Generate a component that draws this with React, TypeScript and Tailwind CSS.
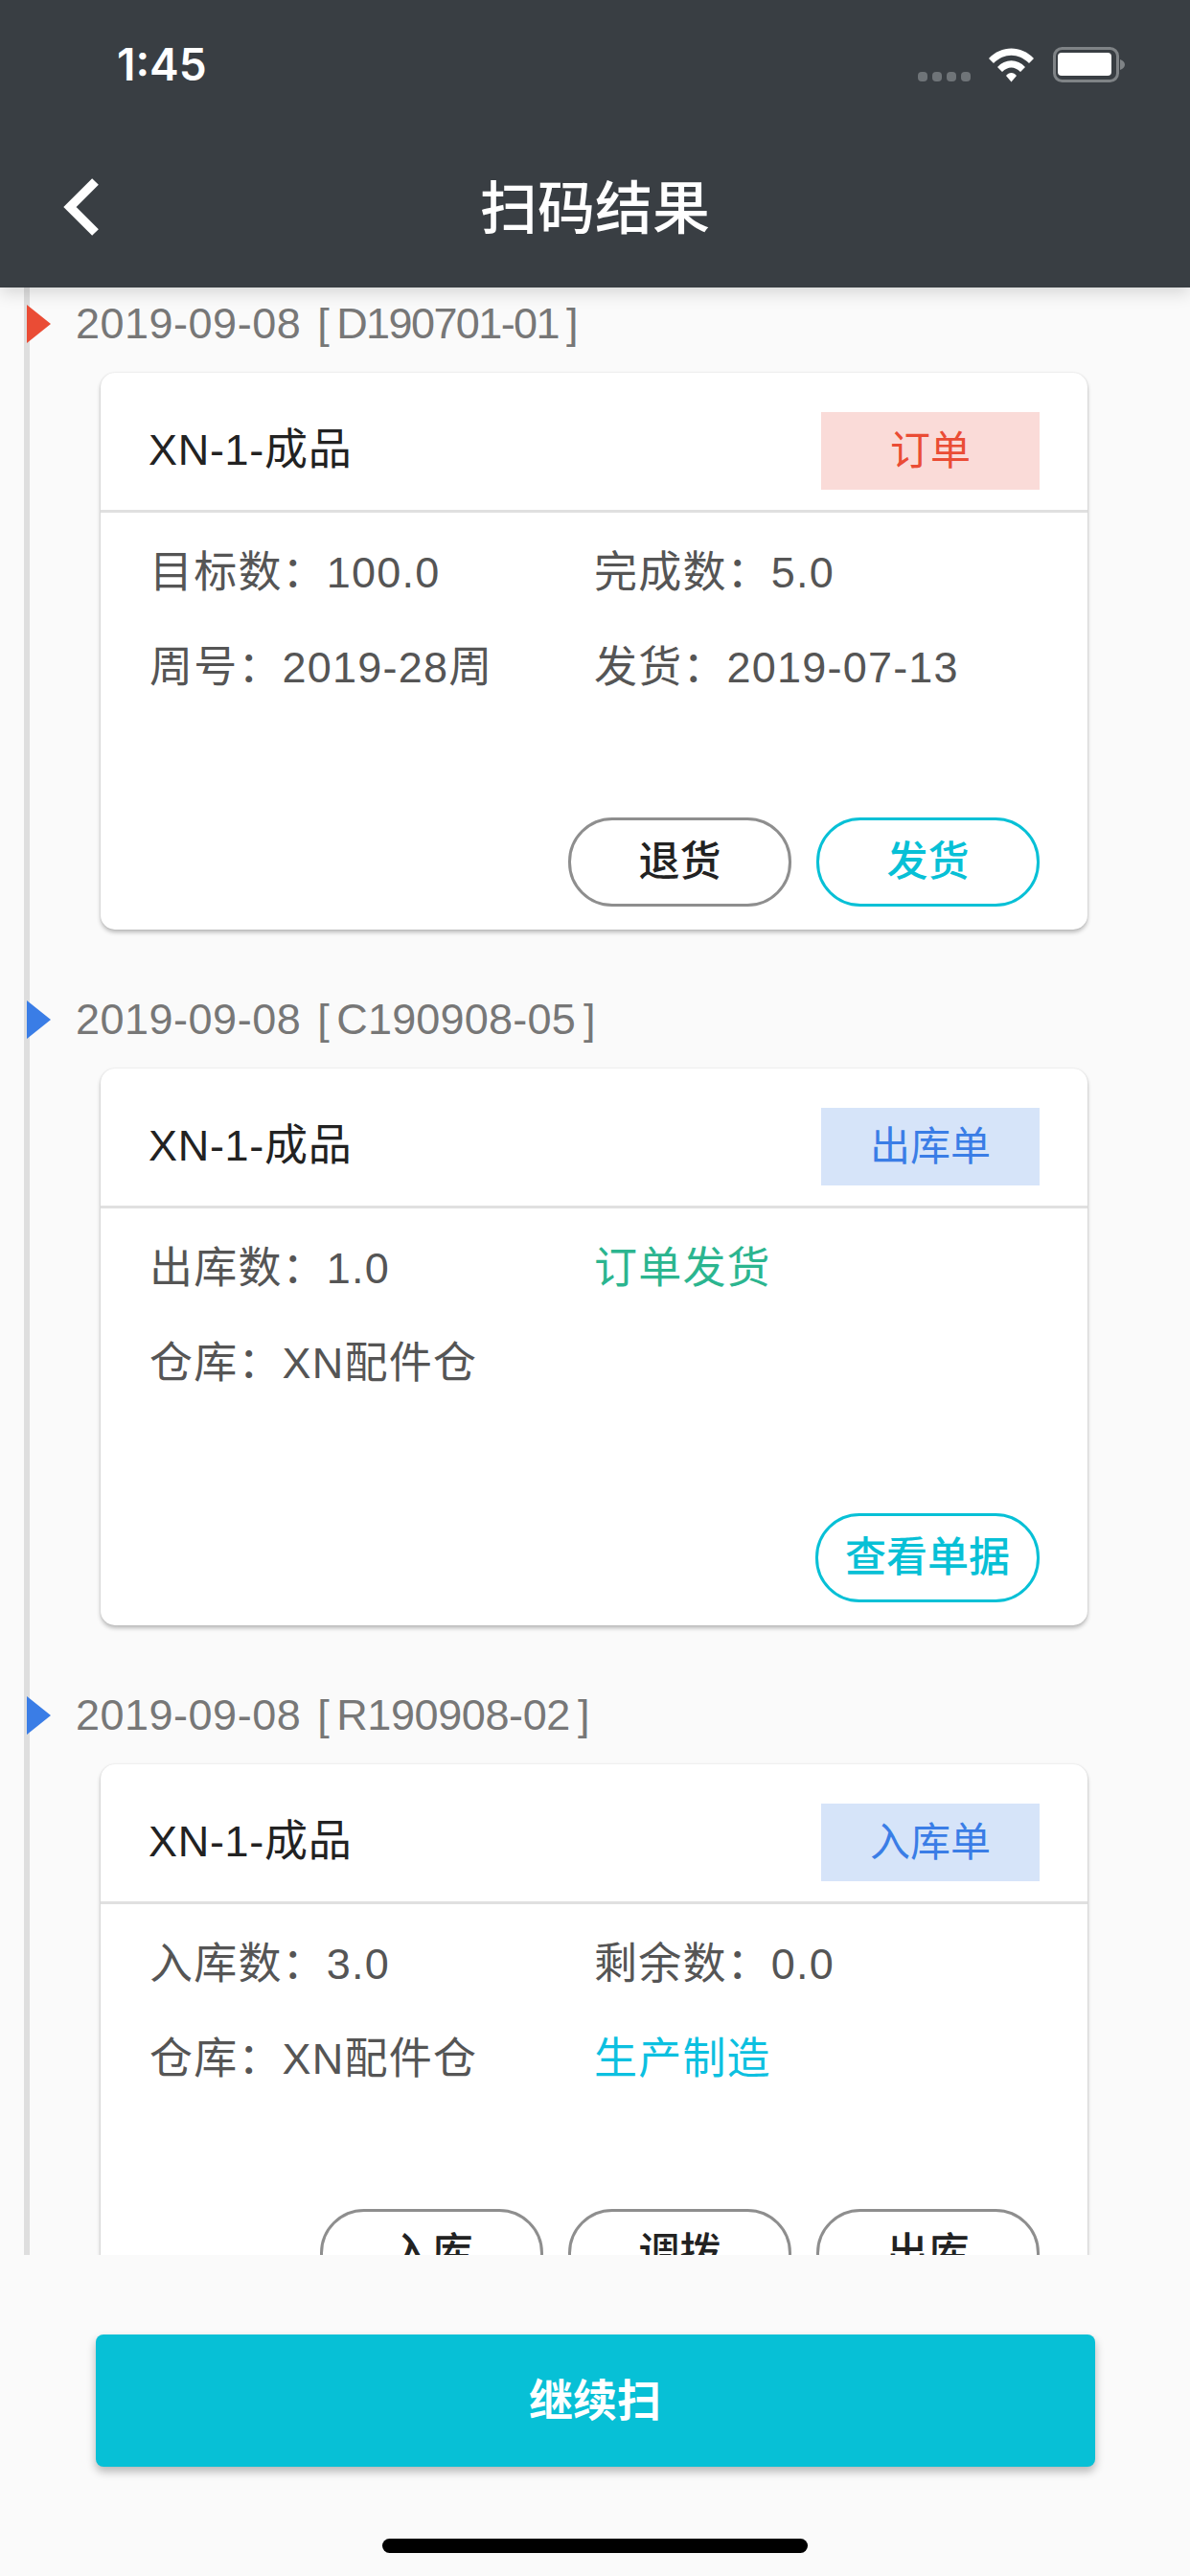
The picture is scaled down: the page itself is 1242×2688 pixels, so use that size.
import React from 'react'

const FONT = "font-['Liberation_Sans','Noto_Sans_CJK_SC',sans-serif]"

type Btn = { label: string; primary?: boolean }
type Cell = { text: string; color?: string }

interface RecordProps {
  date: string
  code: string
  codeClass: string
  arrow: string
  badge: string
  badgeClass: string
  rows: Cell[][]
  buttons: Btn[]
}

const records: RecordProps[] = [
  {
    date: '2019-09-08',
    code: 'D190701-01',
    codeClass: 'tracking-[-1.6px]',
    arrow: 'fill-[#ea4c35]',
    badge: '订单',
    badgeClass: 'bg-[#fadbd8] text-[#ea4c35]',
    rows: [
      [{ text: '目标数：100.0' }, { text: '完成数：5.0' }],
      [{ text: '周号：2019-28周' }, { text: '发货：2019-07-13' }],
    ],
    buttons: [{ label: '退货' }, { label: '发货', primary: true }],
  },
  {
    date: '2019-09-08',
    code: 'C190908-05',
    codeClass: 'tracking-[0.2px]',
    arrow: 'fill-[#3a7de6]',
    badge: '出库单',
    badgeClass: 'bg-[#d6e4f9] text-[#3a7de6]',
    rows: [
      [{ text: '出库数：1.0' }, { text: '订单发货', color: 'text-[#2bb58f]' }],
      [{ text: '仓库：XN配件仓' }],
    ],
    buttons: [{ label: '查看单据', primary: true }],
  },
  {
    date: '2019-09-08',
    code: 'R190908-02',
    codeClass: 'tracking-[-0.4px]',
    arrow: 'fill-[#3a7de6]',
    badge: '入库单',
    badgeClass: 'bg-[#d6e4f9] text-[#3a7de6]',
    rows: [
      [{ text: '入库数：3.0' }, { text: '剩余数：0.0' }],
      [{ text: '仓库：XN配件仓' }, { text: '生产制造', color: 'text-[#0cc0e0]' }],
    ],
    buttons: [{ label: '入库' }, { label: '调拨' }, { label: '出库' }],
  },
]

function StatusIcons() {
  return (
    <div className="flex items-start">
      {/* signal dots */}
      <div className="mt-[75px] flex gap-[5px]">
        <span className="h-[10px] w-[10px] rounded-[4px] bg-[#6f7478]" />
        <span className="h-[10px] w-[10px] rounded-[4px] bg-[#6f7478]" />
        <span className="h-[10px] w-[10px] rounded-[4px] bg-[#6f7478]" />
        <span className="h-[10px] w-[10px] rounded-[4px] bg-[#6f7478]" />
      </div>
      <svg className="ml-[19px] mt-[50px]" width="47" height="36" viewBox="0 0 47 36">
        <path d="M0 11 C13 -3 34 -3 47 11 L42 16 C31 5 16 5 5 16 Z" fill="#fff" />
        <path d="M9 20 C17 11 30 11 38 20 L33 25 C27 19 20 19 14 25 Z" fill="#fff" />
        <path d="M18 29 C21 25 26 25 29 29 L23.5 35.5 Z" fill="#fff" />
      </svg>
      <svg className="ml-[20px] mt-[49px]" width="75" height="37" viewBox="0 0 75 37">
        <rect x="1.5" y="1.5" width="66" height="34" rx="8" fill="none" stroke="#7f8386" strokeWidth="3" />
        <rect x="5" y="6" width="56" height="24" rx="4" fill="#fff" />
        <path d="M70 13 C73 14 75 16 75 18.5 C75 21 73 23 70 24 Z" fill="#7f8386" />
      </svg>
    </div>
  )
}

function ActionButton({ label, primary }: Btn) {
  return (
    <div
      className={
        primary
          ? 'flex h-[93px] min-w-[233px] items-center justify-center rounded-[46px] border-[3px] border-[#07c0d6] px-[28px] text-[43px] font-medium text-[#07c0d6]'
          : 'flex h-[93px] min-w-[233px] items-center justify-center rounded-[46px] border-[3px] border-[#8e8e8e] px-[28px] text-[43px] font-medium text-[#222]'
      }
    >
      {label}
    </div>
  )
}

function RecordItem({ date, code, codeClass, arrow, badge, badgeClass, rows, buttons }: RecordProps) {
  return (
    <div className="h-[726px] shrink-0">
      <div className="flex h-[89px] items-start pt-[18px]">
        <svg className="ml-[28px] shrink-0" width="25" height="40" viewBox="0 0 25 40">
          <path d="M0 0 L25 20 L0 40 Z" className={arrow} />
        </svg>
        <span className="ml-[26px] mt-[-3px] flex text-[45px] leading-[46px] tracking-[0.5px] text-[#777]">
          {date}
          <span className="ml-[17px]">[</span>
          <span className={`ml-[7px] ${codeClass}`}>{code}</span>
          <span className="ml-[8px]">]</span>
        </span>
      </div>
      <div className="ml-[105px] flex h-[581px] w-[1030px] flex-col rounded-[15px] bg-white shadow-[0_3px_4px_rgba(0,0,0,0.25),0_0_2px_rgba(0,0,0,0.12)]">
        <div className="flex h-[146px] shrink-0 items-start justify-between border-b-[3px] border-[#e0e0e0] pl-[50px] pr-[50px] pt-[41px]">
          <span className="mt-[-2px] text-[45px] leading-[84px] tracking-[0.7px] text-[#222]">XN-1-成品</span>
          <span className={`flex h-[81px] w-[228px] items-center justify-center text-[42px] ${badgeClass}`}>{badge}</span>
        </div>
        <div className="flex flex-1 flex-col pb-[24px] pl-[51px] pr-[50px] pt-[13px]">
          {rows.map((row, i) => (
            <div key={i} className="flex h-[99px] items-center text-[45px] tracking-[1.2px] text-[#555]">
              {row.map((cell, j) => (
                <span key={j} className={`w-[464px] ${cell.color ?? ''}`}>
                  {cell.text}
                </span>
              ))}
            </div>
          ))}
          <div className="mt-auto flex justify-end gap-[26px]">
            {buttons.map((b) => (
              <ActionButton key={b.label} {...b} />
            ))}
          </div>
        </div>
      </div>
    </div>
  )
}

export default function App() {
  return (
    <div className={`flex h-[2688px] w-[1242px] flex-col overflow-hidden bg-[#fafafa] ${FONT}`}>
      {/* header */}
      <div className="relative z-10 h-[300px] shrink-0 bg-[#393e43] shadow-[0_6px_16px_rgba(0,0,0,0.14)]">
        <div className="flex h-[132px] items-start justify-between pl-[122px] pr-[68px]">
          <span className="mt-[41px] font-['Inter'] text-[46px] font-semibold leading-[52px] text-white">1:45</span>
          <StatusIcons />
        </div>
        <div className="relative flex h-[168px] items-center justify-center">
          <svg className="absolute left-[66px] top-[54px]" width="38" height="60" viewBox="0 0 38 60">
            <path d="M33.5 3.5 L7 30 L33.5 56.5" fill="none" stroke="#fff" strokeWidth="9.5" />
          </svg>
          <span className="mt-[6px] text-[60px] font-medium leading-[72px] text-white">扫码结果</span>
        </div>
      </div>

      {/* timeline list */}
      <div className="relative h-[2053px] shrink-0 overflow-hidden">
        <div className="absolute bottom-0 left-[25px] top-0 w-[6px] bg-[#dedede]" />
        <div className="relative flex flex-col">
          {records.map((r) => (
            <RecordItem key={r.code} {...r} />
          ))}
        </div>
      </div>

      {/* footer */}
      <div className="flex flex-1 flex-col items-center">
        <div className="mt-[83px] flex h-[138px] w-[1043px] items-center justify-center rounded-[8px] bg-[#07c0d6] text-[46px] font-bold text-white shadow-[0_5px_10px_rgba(0,0,0,0.28)]">
          继续扫
        </div>
        <div className="mt-[75px] h-[15px] w-[444px] rounded-full bg-black" />
      </div>
    </div>
  )
}
